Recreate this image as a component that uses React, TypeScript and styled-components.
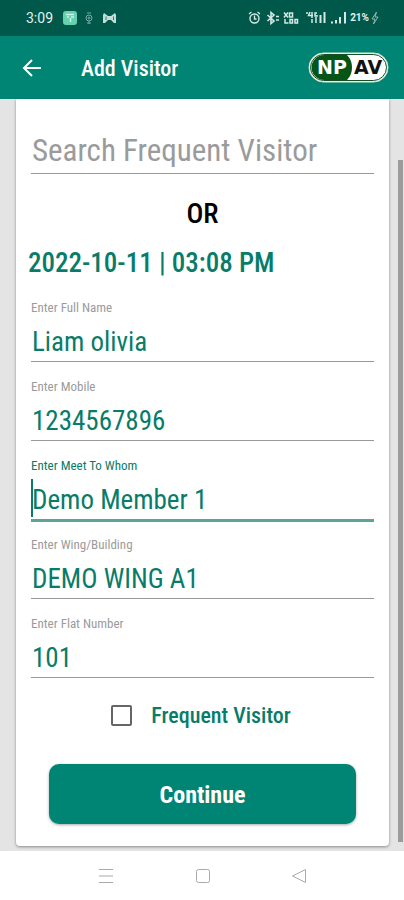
import React, { useState } from "react";
import styled, { createGlobalStyle } from "styled-components";

const green = "#008575";
const ink = "#087c69";
const condensed = '"Roboto Condensed", "Liberation Sans Narrow", Roboto, sans-serif';

const GlobalStyle = createGlobalStyle`
  * { box-sizing: border-box; }
  body { margin: 0; background: #fff; font-family: ${condensed}; }
  button, input { font-family: inherit; }
`;

const Screen = styled.div`
  min-height: 100vh;
  display: flex;
  flex-direction: column;
`;

const StatusBar = styled.div`
  height: 36px;
  padding: 0 25px 0 26px;
  display: flex;
  align-items: center;
  justify-content: space-between;
  background: #00584b;
  color: #e3f1ee;
`;

const StatusGroup = styled.div<{ $gap: number }>`
  display: flex;
  align-items: center;
  gap: ${(p) => p.$gap}px;
`;

const Clock = styled.span`
  font: 400 14px/20px Roboto, sans-serif;
`;

const Battery = styled.span`
  font: 700 10px/14px Roboto, sans-serif;
`;

const AppBar = styled.header`
  height: 63px;
  padding: 0 15px 0 20px;
  display: flex;
  align-items: center;
  background: ${green};
  color: #fff;
`;

const BackButton = styled.button`
  width: 24px;
  height: 24px;
  padding: 0;
  border: 0;
  background: none;
  color: inherit;
  svg { display: block; }
`;

const Title = styled.h1`
  flex: 1;
  margin: 0 0 0 37px;
  padding-top: 2px;
  font-size: 22px;
  line-height: 32px;
  font-weight: 500;
`;

const Logo = styled.svg`
  width: 81px;
  height: 31px;
  display: block;
`;

const Content = styled.main`
  position: relative;
  flex: 1;
  padding: 0 15px 5px 16px;
  background: #e4e4e4;
`;

const ScrollThumb = styled.div`
  position: absolute;
  top: 61px;
  right: 1px;
  bottom: 9px;
  width: 5px;
  background: #9b9b9b;
`;

const Card = styled.form`
  display: flex;
  flex-direction: column;
  padding: 30px 15px 22px;
  background: #fff;
  border-radius: 0 0 4px 4px;
  box-shadow: 0 1px 3px rgba(0, 0, 0, 0.4);
`;

const SearchInput = styled.input`
  width: 100%;
  height: 45px;
  padding: 0 1px 2px;
  border: 0;
  border-bottom: 1px solid #999;
  border-radius: 0;
  background: none;
  outline: none;
  font-size: 31px;
  color: ${ink};
  &::placeholder { color: #9b9b9b; opacity: 1; }
`;

const Divider = styled.p`
  margin: 22px 0 0;
  font-size: 28px;
  line-height: 36px;
  font-weight: 500;
  text-align: center;
  color: #000;
`;

const DateLine = styled.p`
  margin: 13px 0 2px -3px;
  font-size: 27px;
  line-height: 36px;
  font-weight: 500;
  color: ${ink};
`;

const FieldBox = styled.label<{ $active?: boolean }>`
  display: flex;
  flex-direction: column;
  height: 79px;
  padding-top: 16px;
  font-size: 13px;
  line-height: 18px;
  color: ${(p) => (p.$active ? ink : "#9b9b9b")};
`;

const FieldRow = styled.span<{ $active?: boolean }>`
  position: relative;
  display: flex;
  flex-shrink: 0;
  align-items: flex-end;
  height: ${(p) => (p.$active ? 47 : 45)}px;
  border-bottom: ${(p) => (p.$active ? "3px solid #5da496" : "1px solid #999")};
`;

const FieldInput = styled.input`
  width: 100%;
  min-width: 0;
  height: 38px;
  padding: 0 1px;
  border: 0;
  background: none;
  outline: none;
  font-size: 27px;
  color: ${ink};
`;

const Caret = styled.span`
  position: absolute;
  left: 0;
  bottom: 2px;
  width: 2px;
  height: 38px;
  background: ${ink};
`;

const CheckLabel = styled.label`
  display: flex;
  align-items: center;
  justify-content: center;
  gap: 19px;
  height: 32px;
  margin: 21px 3px 0 0;
  font-size: 22px;
  font-weight: 500;
  color: ${ink};
`;

const CheckBox = styled.input`
  appearance: none;
  width: 21px;
  height: 21px;
  margin: 0;
  border: 2px solid #666;
  border-radius: 2px;
  background: #fff;
  &:checked { background: ${green}; }
`;

const ContinueButton = styled.button`
  height: 60px;
  margin: 33px 18px 0;
  padding: 2px 0 0;
  border: 0;
  border-radius: 10px;
  background: ${green};
  box-shadow: 0 1px 3px rgba(0, 0, 0, 0.35);
  color: #fff;
  font-size: 24px;
  font-weight: 700;
`;

const NavBar = styled.nav`
  height: 49px;
  padding: 0 95px 0 96px;
  display: flex;
  align-items: center;
  justify-content: space-between;
  background: #fff;
`;

const NavButton = styled.button`
  width: 20px;
  height: 20px;
  padding: 0;
  border: 0;
  background: none;
  color: #aaa;
  svg { display: block; }
`;

const fields = [
  { label: "Enter Full Name", value: "Liam olivia" },
  { label: "Enter Mobile", value: "1234567896" },
  { label: "Enter Meet To Whom", value: "Demo Member 1", active: true },
  { label: "Enter Wing/Building", value: "DEMO WING A1" },
  { label: "Enter Flat Number", value: "101" },
];

function Field({ label, value, active }: { label: string; value: string; active?: boolean }) {
  const [text, setText] = useState(value);
  return (
    <FieldBox $active={active}>
      {label}
      <FieldRow $active={active}>
        <FieldInput value={text} onChange={(e) => setText(e.target.value)} />
        {active && <Caret />}
      </FieldRow>
    </FieldBox>
  );
}

function NoticeIcons() {
  return (
    <svg width="54" height="16" viewBox="0 0 54 16" aria-hidden="true">
      <rect x="0" y="1" width="14" height="14" rx="3" fill="#66d1b1" />
      <path d="M3 4.500h8M4 7h2M8 7h3M7.500 8v4" stroke="#c9f4e6" strokeWidth="1.500" fill="none" />
      <g stroke="#79a9a1" fill="none">
        <circle cx="26" cy="8" r="3" />
        <circle cx="26" cy="8" r="1" />
        <path d="M24 3h4M24 13h4M26 11v3" />
      </g>
      <path d="M41 3l4 3h3l4-3 1 2v8h-2l-3-3h-3l-3 3h-2V5z" fill="#c5ddd8" />
      <path d="M43 6.500v3.500M50.500 6.500v3.500" stroke="#39776c" />
    </svg>
  );
}

function SystemIcons() {
  return (
    <svg width="100" height="16" viewBox="0 0 100 16" aria-hidden="true" fill="none" stroke="#d5e8e4">
      <circle cx="6.500" cy="8.500" r="4.500" strokeWidth="1.400" />
      <path d="M6.500 5.500v3.500h2M1 4l2.500-2M12 4L9.500 2" strokeWidth="1.300" />
      <path d="M19.500 5l6.500 6-3 2.500v-11l3 2.500-6.500 6M28 6.500h3M28 10h3" strokeWidth="1.600" />
      <path d="M36 2.500l2 2.500 2-2.500M36 7.500l2-2.500 2 2.500M41.500 3h3v4h-3zM37 9v4h3.500M42 13V9.500h2.500V13zM47 13V9.500h2.500V13z" strokeWidth="1.500" />
      <path d="M58 3h2M62 2l-1.500 3.500H65M64 2v6M69 3h-2v3h2V5M64 13V9M68 13V7" strokeWidth="1.500" />
      <path d="M72.500 13V5M76.500 13V2" strokeWidth="2" />
      <path d="M84 13.500v-2M88 13.500V10M92 13.500V7M97 13.500V2" strokeWidth="2" />
    </svg>
  );
}

export default function App() {
  const [frequent, setFrequent] = useState(false);
  return (
    <Screen>
      <GlobalStyle />
      <StatusBar>
        <StatusGroup $gap={10}>
          <Clock>3:09</Clock>
          <NoticeIcons />
        </StatusGroup>
        <StatusGroup $gap={2}>
          <SystemIcons />
          <Battery>21%</Battery>
          <svg width="8" height="14" viewBox="0 0 8 14" aria-hidden="true">
            <path d="M5.500 1L1 8h3l-1.500 5L7 6H4z" fill="none" stroke="#8db9b1" />
          </svg>
        </StatusGroup>
      </StatusBar>
      <AppBar>
        <BackButton aria-label="Back">
          <svg width="24" height="24" viewBox="0 0 24 24" fill="none" stroke="currentColor" strokeWidth="2">
            <path d="M21 12H5M12 4l-8 8 8 8" />
          </svg>
        </BackButton>
        <Title>Add Visitor</Title>
        <Logo viewBox="0 0 81 31" role="img" aria-label="NPAV">
          <rect x="1" y="1" width="79" height="29" rx="14.500" fill="#fff" stroke="#d5e3d5" />
          <rect x="2.500" y="2.500" width="76" height="26" rx="13" fill="#fff" stroke="#174d25" />
          <path d="M16 3H39Q44 8 44 15.500T39 28H16A12.500 12.500 0 0 1 16 3z" fill="#075516" />
          <g fontFamily="DejaVu Sans, sans-serif" fontWeight="700" fontSize="19">
            <text x="9" y="22" fill="#fff">NP</text>
            <text x="46" y="22" fill="#111">AV</text>
          </g>
        </Logo>
      </AppBar>
      <Content>
        <Card onSubmit={(e) => e.preventDefault()}>
          <SearchInput aria-label="Search Frequent Visitor" placeholder="Search Frequent Visitor" />
          <Divider>OR</Divider>
          <DateLine>2022-10-11 | 03:08 PM</DateLine>
          {fields.map((f) => (
            <Field key={f.label} {...f} />
          ))}
          <CheckLabel>
            <CheckBox type="checkbox" checked={frequent} onChange={(e) => setFrequent(e.target.checked)} />
            Frequent Visitor
          </CheckLabel>
          <ContinueButton type="submit">Continue</ContinueButton>
        </Card>
        <ScrollThumb />
      </Content>
      <NavBar>
        <NavButton aria-label="Recent apps">
          <svg width="20" height="20" viewBox="0 0 20 20" stroke="currentColor" fill="none">
            <path d="M3 3.500h14M3 10h14M3 16.500h14" />
          </svg>
        </NavButton>
        <NavButton aria-label="Home">
          <svg width="20" height="20" viewBox="0 0 20 20" stroke="currentColor" fill="none">
            <rect x="3.500" y="3.500" width="13" height="13" rx="2" />
          </svg>
        </NavButton>
        <NavButton aria-label="Back">
          <svg width="20" height="20" viewBox="0 0 20 20" stroke="currentColor" fill="none" strokeLinejoin="round">
            <path d="M16.500 3.500v13L3.500 10z" />
          </svg>
        </NavButton>
      </NavBar>
    </Screen>
  );
}
